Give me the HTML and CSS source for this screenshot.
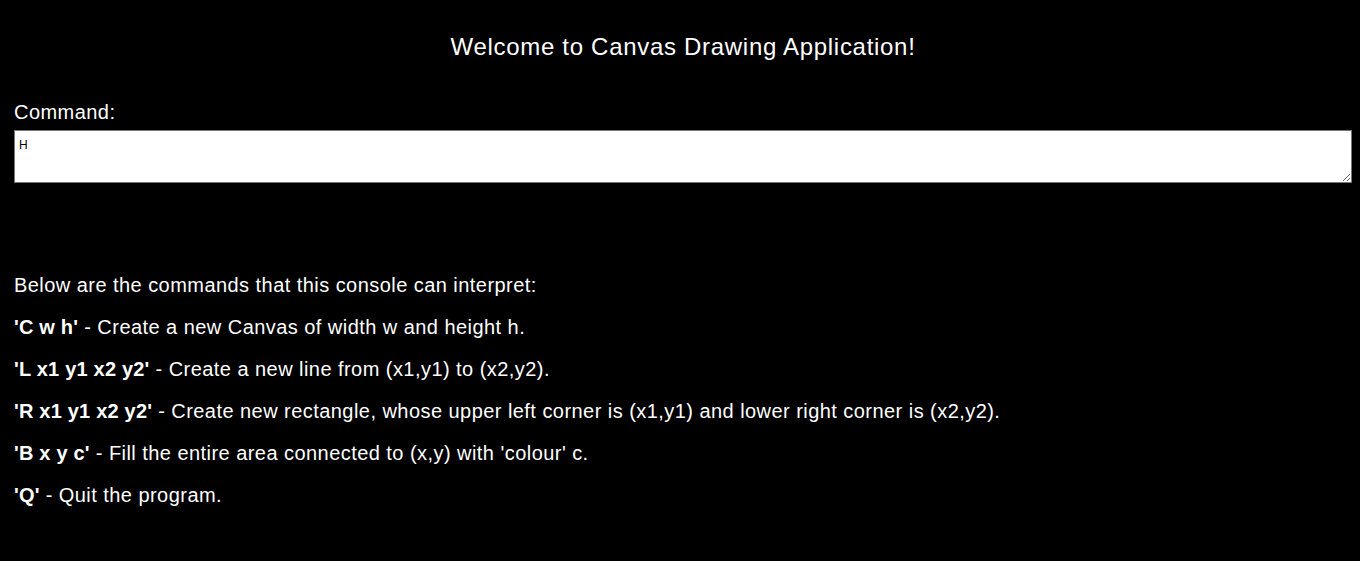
FILE: index.html
```html
<!DOCTYPE html>
<html>
<head>
<meta charset="utf-8">
<link rel="stylesheet" href="styles.css">
</head>
<body>
<div class="app">
  <h1 class="title">Welcome to Canvas Drawing Application!</h1>
  <div class="command">
    <label class="label" for="cmd">Command:</label>
    <textarea id="cmd" class="input">H</textarea>
  </div>
  <div class="help">
    <p class="line">Below are the commands that this console can interpret:</p>
    <p class="line"><b>'C w h'</b> - Create a new Canvas of width w and height h.</p>
    <p class="line"><b>'L x1 y1 x2 y2'</b> - Create a new line from (x1,y1) to (x2,y2).</p>
    <p class="line"><b>'R x1 y1 x2 y2'</b> - Create new rectangle, whose upper left corner is (x1,y1) and lower right corner is (x2,y2).</p>
    <p class="line"><b>'B x y c'</b> - Fill the entire area connected to (x,y) with 'colour' c.</p>
    <p class="line"><b>'Q'</b> - Quit the program.</p>
  </div>
</div>
</body>
</html>
```
FILE: styles.css
```css
html, body {
  margin: 0;
  background: #000;
}
body {
  color: #fff;
  font-family: "Liberation Sans", Arial, sans-serif;
  font-size: 20px;
  letter-spacing: 0.45px;
}
.app {
  padding: 0 8px 0 14px;
}
.title {
  margin: 0;
  padding-top: 33px;
  font-size: 24px;
  letter-spacing: 0.7px;
  font-weight: normal;
  text-align: center;
  line-height: 28px;
}
.command {
  margin-top: 40px;
}
.label {
  display: block;
  line-height: 23px;
  margin-bottom: 6px;
}
.input {
  display: block;
  box-sizing: border-box;
  width: 100%;
  height: 53px;
  margin: 0;
  border: 1px solid #767676;
  padding: 7px 4px;
  font-family: "Liberation Sans", Arial, sans-serif;
  font-size: 12px;
  letter-spacing: 0;
  color: #000;
  background: #fff;
}
.help {
  margin-top: 91px;
}
.line {
  margin: 0 0 19px;
  line-height: 23px;
}
.line b {
  letter-spacing: 0.2px;
}
```
